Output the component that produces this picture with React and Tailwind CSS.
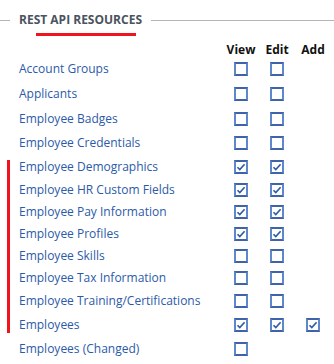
import React from "react";

const rows = [
  { name: "Account Groups", h: "h-[24px]", v: false, e: false, a: null },
  { name: "Applicants", h: "h-[26px]", v: false, e: false, a: null },
  { name: "Employee Badges", h: "h-[24px]", v: false, e: false, a: null },
  { name: "Employee Credentials", h: "h-[24px]", v: false, e: false, a: null },
  { name: "Employee Demographics", h: "h-[24px]", v: true, e: true, a: null },
  { name: "Employee HR Custom Fields", h: "h-[22px]", v: true, e: true, a: null },
  { name: "Employee Pay Information", h: "h-[22px]", v: true, e: true, a: null },
  { name: "Employee Profiles", h: "h-[22px]", v: true, e: true, a: null },
  { name: "Employee Skills", h: "h-[22px]", v: false, e: false, a: null },
  { name: "Employee Tax Information", h: "h-[22px]", v: false, e: false, a: null },
  { name: "Employee Training/Certifications", h: "h-[24px]", v: false, e: false, a: null },
  { name: "Employees", h: "h-[24px]", v: true, e: true, a: true },
  { name: "Employees (Changed)", h: "h-[24px]", v: false, e: null, a: null },
];

function Box({ checked }) {
  if (checked === null) return null;
  return (
    <div className="w-[14px] h-[14px] border-2 border-[#5f88ca] border-t-[#3f63a8] border-b-[#3f63a8] bg-white flex items-center justify-center">
      {checked && (
        <svg width="10" height="10" viewBox="0 0 10 10">
          <path d="M1.5 5.2 L3.8 7.6 L8.6 2.2" fill="none" stroke="#2d5aa6" strokeWidth="1.6" />
        </svg>
      )}
    </div>
  );
}

export default function App() {
  return (
    <div className="relative w-[334px] h-[364px] bg-white overflow-hidden" style={{ fontFamily: '"Open Sans", "Noto Sans", sans-serif' }}>
      <div className="flex items-center h-[40px]">
        <div className="w-[10px] h-px bg-[#b5b5b5]" />
        <div className="px-[9px] text-[12px] font-bold text-[#4a5360] leading-none">REST API RESOURCES</div>
        <div className="flex-1 h-px bg-[#b5b5b5]" />
      </div>
      <div className="absolute left-[36px] top-[33px] w-[100px] h-[3px] bg-[#f0141e]" />
      <div className="absolute left-[7px] top-[160px] w-[3px] h-[173px] bg-[#f0141e]" />
      <div className="flex flex-col pr-[3px]">
        <div className="flex items-center h-[17px] pt-[2px] text-[12px] font-bold text-[#111]">
          <div className="flex-1" />
          <div className="w-9 text-center">View</div>
          <div className="w-9 text-center">Edit</div>
          <div className="w-9 text-center">Add</div>
        </div>
        {rows.map((r) => (
          <div key={r.name} className={`flex items-center ${r.h}`}>
            <div className="flex-1 pl-[19px] text-[12px] text-[#2b5aa8] whitespace-nowrap">{r.name}</div>
            <div className="w-9 flex justify-center"><Box checked={r.v} /></div>
            <div className="w-9 flex justify-center"><Box checked={r.e} /></div>
            <div className="w-9 flex justify-center"><Box checked={r.a} /></div>
          </div>
        ))}
      </div>
    </div>
  );
}
